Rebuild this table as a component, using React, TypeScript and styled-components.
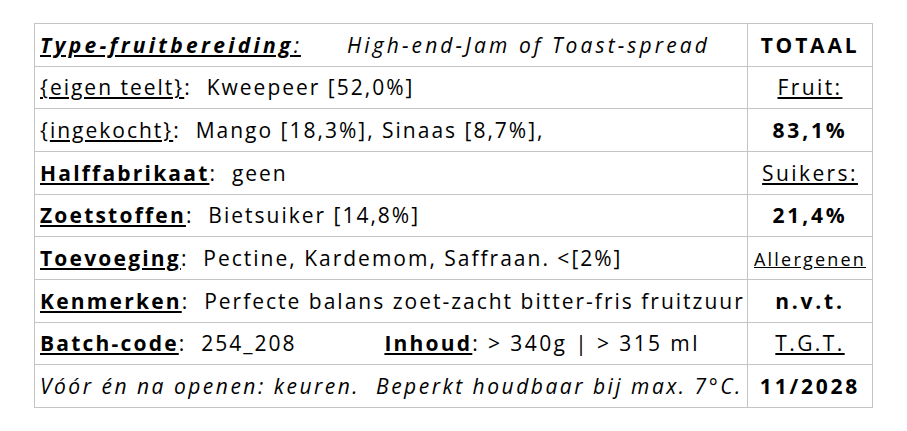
import React from 'react';
import styled, { createGlobalStyle } from 'styled-components';

const GlobalStyle = createGlobalStyle`
    body {
        margin: 0;
        background: #ffffff;
        font-family: 'Open Sans', 'Noto Sans', sans-serif;
        color: #000000;
    }
`;

const Page = styled.div`
    padding: 23px 0 0 34px;
`;

const Table = styled.table`
    border-collapse: collapse;
    width: 839px;
    font-size: 21px;
    letter-spacing: 2px;
`;

const Cell = styled.td<{ $side?: boolean }>`
    border: 1px solid #c4c4c4;
    height: 41.67px;
    padding: ${({ $side }) => ($side ? '0' : '0 0 0 5px')};
    white-space: nowrap;
    text-align: ${({ $side }) => ($side ? 'center' : 'left')};
    width: ${({ $side }) => ($side ? '124px' : 'auto')};
`;

const Label = styled.span`
    font-weight: 700;
    text-decoration: underline;
    letter-spacing: 2.2px;
`;

const Under = styled.span<{ $wide?: boolean }>`
    text-decoration: underline;
    letter-spacing: ${({ $wide }) => ($wide ? '2.4px' : 'inherit')};
`;

const Heading = styled.span`
    font-style: italic;
    text-decoration: underline;

    ${Label} {
        letter-spacing: 3.3px;
    }
`;

const Subtitle = styled.span`
    font-style: italic;
    letter-spacing: 3.1px;
    margin-left: 46px;
`;

const Notice = styled.span`
    font-style: italic;
    letter-spacing: 2.5px;
`;

const Strong = styled.span`
    font-weight: 700;
    letter-spacing: 2.8px;
`;

const Small = styled.span`
    font-size: 18px;
    letter-spacing: 2.2px;
    text-decoration: underline;
`;

const Second = styled.span`
    margin-left: 88px;
    letter-spacing: 2.4px;
`;

export default function App() {
    return (
        <Page>
            <GlobalStyle />
            <Table>
                <tbody>
                    <tr>
                        <Cell>
                            <Heading>
                                <Label>Type-fruitbereiding</Label>:
                            </Heading>
                            <Subtitle>High-end-Jam of Toast-spread</Subtitle>
                        </Cell>
                        <Cell $side>
                            <Strong>TOTAAL</Strong>
                        </Cell>
                    </tr>
                    <tr>
                        <Cell>
                            <Under>{'{eigen teelt}'}</Under>:&nbsp; Kweepeer [52,0%]
                        </Cell>
                        <Cell $side>
                            <Under $wide>Fruit:</Under>
                        </Cell>
                    </tr>
                    <tr>
                        <Cell>
                            {'{'}
                            <Under>{'ingekocht}'}</Under>:&nbsp; Mango [18,3%], Sinaas [8,7%],
                        </Cell>
                        <Cell $side>
                            <Strong>83,1%</Strong>
                        </Cell>
                    </tr>
                    <tr>
                        <Cell>
                            <Label>Halffabrikaat</Label>:&nbsp; geen
                        </Cell>
                        <Cell $side>
                            <Under $wide>Suikers:</Under>
                        </Cell>
                    </tr>
                    <tr>
                        <Cell>
                            <Label>Zoetstoffen</Label>:&nbsp; Bietsuiker [14,8%]
                        </Cell>
                        <Cell $side>
                            <Strong>21,4%</Strong>
                        </Cell>
                    </tr>
                    <tr>
                        <Cell>
                            <Label>Toevoeging</Label>:&nbsp; Pectine, Kardemom, Saffraan. &lt;[2%]
                        </Cell>
                        <Cell $side>
                            <Small>Allergenen</Small>
                        </Cell>
                    </tr>
                    <tr>
                        <Cell>
                            <Label>Kenmerken</Label>:&nbsp; Perfecte balans zoet-zacht bitter-fris fruitzuur
                        </Cell>
                        <Cell $side>
                            <Strong>n.v.t.</Strong>
                        </Cell>
                    </tr>
                    <tr>
                        <Cell>
                            <Label>Batch-code</Label>:&nbsp; 254_208
                            <Second>
                                <Label>Inhoud</Label>: &gt; 340g | &gt; 315 ml
                            </Second>
                        </Cell>
                        <Cell $side>
                            <Under $wide>T.G.T.</Under>
                        </Cell>
                    </tr>
                    <tr>
                        <Cell>
                            <Notice>Vóór én na openen: keuren.&nbsp; Beperkt houdbaar bij max. 7°C.</Notice>
                        </Cell>
                        <Cell $side>
                            <Strong>11/2028</Strong>
                        </Cell>
                    </tr>
                </tbody>
            </Table>
        </Page>
    );
}
